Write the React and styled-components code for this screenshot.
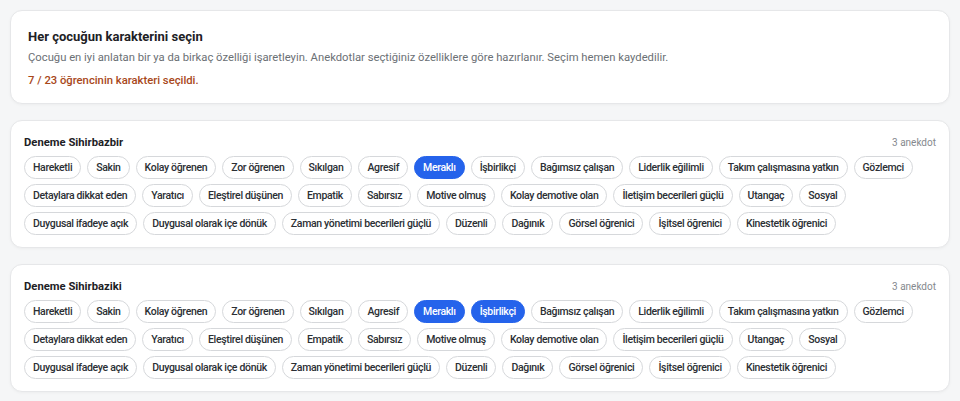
import React from "react";
import styled, { createGlobalStyle } from "styled-components";

const GlobalStyle = createGlobalStyle`
  body {
    margin: 0;
    background: #f5f6f7;
    font-family: Roboto, "Liberation Sans", sans-serif;
    color: #1f2328;
  }
`;

const Page = styled.div`
  display: flex;
  flex-direction: column;
  gap: 16px;
  padding: 10px;
`;

const Card = styled.section`
  background: #fff;
  border: 1px solid #e6e7e9;
  border-radius: 12px;
  box-shadow: 0 1px 3px rgba(0, 0, 0, 0.04);
  padding: ${(p) => p.pad || "15px 13px 12px"};
`;

const IntroTitle = styled.h2`
  margin: 0;
  font-size: 13px;
  font-weight: 700;
  color: #1d2125;
`;

const IntroText = styled.p`
  margin: 7px 0 0;
  font-size: 11.25px;
  color: #6b7075;
`;

const Progress = styled.p`
  margin: 10px 0 0;
  font-size: 11.25px;
  font-weight: 500;
  color: #a8481a;
`;

const Head = styled.div`
  display: flex;
  align-items: center;
  justify-content: space-between;
  margin-bottom: 7px;
`;

const Name = styled.h3`
  margin: 0;
  font-size: 11.25px;
  font-weight: 700;
  color: #1d2125;
`;

const Count = styled.span`
  font-size: 10px;
  color: #85898e;
`;

const Chips = styled.div`
  display: flex;
  flex-wrap: wrap;
  gap: 5px 6px;
`;

const Chip = styled.button`
  font-family: inherit;
  font-size: 10.5px;
  font-weight: 500;
  letter-spacing: -0.33px;
  line-height: 13px;
  padding: 4px 8px;
  border-radius: 999px;
  border: 1px solid ${(p) => (p.$on ? "#2563eb" : "#d6d8db")};
  background: ${(p) => (p.$on ? "#2563eb" : "#fff")};
  color: ${(p) => (p.$on ? "#fff" : "#2b2f34")};
  cursor: pointer;
`;

const TRAITS = [
  "Hareketli", "Sakin", "Kolay öğrenen", "Zor öğrenen", "Sıkılgan", "Agresif",
  "Meraklı", "İşbirlikçi", "Bağımsız çalışan", "Liderlik eğilimli",
  "Takım çalışmasına yatkın", "Gözlemci", "Detaylara dikkat eden", "Yaratıcı",
  "Eleştirel düşünen", "Empatik", "Sabırsız", "Motive olmuş",
  "Kolay demotive olan", "İletişim becerileri güçlü", "Utangaç", "Sosyal",
  "Duygusal ifadeye açık", "Duygusal olarak içe dönük",
  "Zaman yönetimi becerileri güçlü", "Düzenli", "Dağınık", "Görsel öğrenici",
  "İşitsel öğrenici", "Kinestetik öğrenici",
];

const STUDENTS = [
  { name: "Deneme Sihirbazbir", count: 3, picked: ["Meraklı"] },
  { name: "Deneme Sihirbaziki", count: 3, picked: ["Meraklı", "İşbirlikçi"] },
];

function StudentCard({ student }) {
  return (
    <Card>
      <Head>
        <Name>{student.name}</Name>
        <Count>{student.count} anekdot</Count>
      </Head>
      <Chips>
        {TRAITS.map((t) => (
          <Chip key={t} $on={student.picked.includes(t)}>
            {t}
          </Chip>
        ))}
      </Chips>
    </Card>
  );
}

export default function App() {
  return (
    <>
      <GlobalStyle />
      <Page>
        <Card pad="18px 17px 16px">
          <IntroTitle>Her çocuğun karakterini seçin</IntroTitle>
          <IntroText>
            Çocuğu en iyi anlatan bir ya da birkaç özelliği işaretleyin. Anekdotlar seçtiğiniz
            özelliklere göre hazırlanır. Seçim hemen kaydedilir.
          </IntroText>
          <Progress>7 / 23 öğrencinin karakteri seçildi.</Progress>
        </Card>
        {STUDENTS.map((s) => (
          <StudentCard key={s.name} student={s} />
        ))}
      </Page>
    </>
  );
}
